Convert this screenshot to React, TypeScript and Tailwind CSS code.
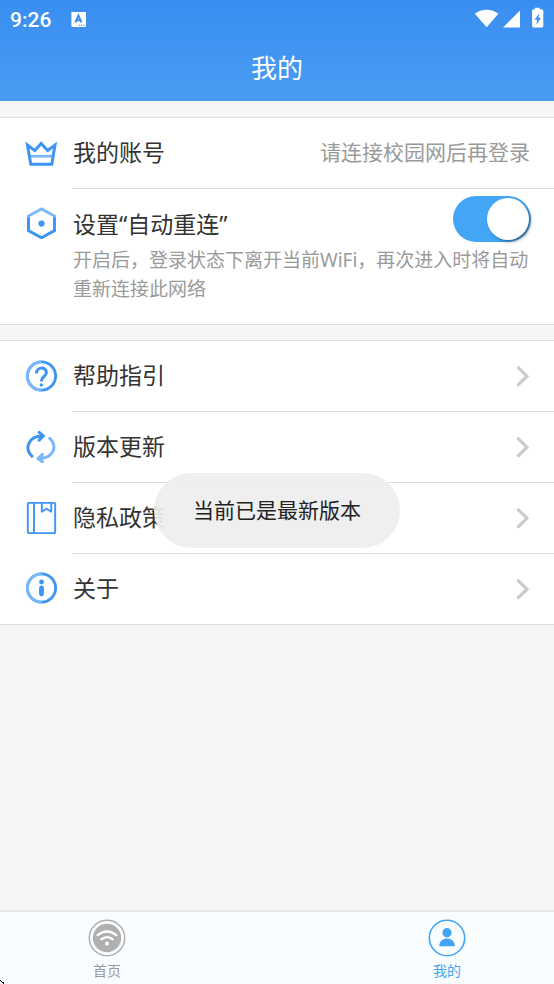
import { useState } from "react";
import type { ReactNode } from "react";

const BLUE = "#3d94f3";
const PALE = "#7ab8fa";

function CrownIcon() {
  return (
    <svg viewBox="0 0 32 32" className="size-8" fill="none" aria-hidden="true">
      <path d="M5.5 18.2H27.5" stroke={PALE} strokeWidth="2.8" />
      <path d="M2.4 7 5.8 26.2H26.8L30 7 22.6 12.4 16.2 5.4 9.8 12.4Z" stroke={BLUE} strokeWidth="3" />
    </svg>
  );
}

function HexIcon() {
  return (
    <svg viewBox="0 0 32 32" className="size-8" fill="none" strokeWidth="2.9" aria-hidden="true">
      <path d="M3.5 11V9L16.5 1.9 29.5 9V11" stroke={PALE} />
      <path d="M3.5 10.4V23.6L16.5 30.8 29.5 23.6V10.4" stroke={BLUE} />
      <circle cx="16.5" cy="16.6" r="3.1" fill={BLUE} />
    </svg>
  );
}

function Ring() {
  return (
    <>
      <circle cx="16.5" cy="16" r="14.1" stroke={BLUE} />
      <path d="M16.5 1.9A14.1 14.1 0 0 0 16.5 30.1" stroke={PALE} />
    </>
  );
}

function HelpIcon() {
  return (
    <svg viewBox="0 0 32 32" className="size-8" fill="none" strokeWidth="2.9" aria-hidden="true">
      <Ring />
      <path d="M11.4 13.4C11.4 6.4 21.4 6.6 21.4 12.6 21.4 16.4 16.3 16.6 16.3 21.4" stroke={BLUE} strokeWidth="3" />
      <circle cx="16.3" cy="25" r="1.7" fill={BLUE} />
    </svg>
  );
}

function UpdateIcon() {
  return (
    <svg viewBox="0 0 32 32" className="size-8" fill="none" strokeWidth="3" strokeLinecap="round" strokeLinejoin="round" aria-hidden="true">
      <path d="M7 25.2C-1 17.2 3.4 5 17.6 5M14.2 1.4 18.4 5 14.2 9.2" stroke={BLUE} />
      <path d="M24.8 7.4C32.8 15.4 28.8 27.4 13.6 27.6M17.4 23.4 13 27.6 17.4 30.8" stroke={PALE} />
    </svg>
  );
}

function BookIcon() {
  return (
    <svg viewBox="0 0 32 32" className="size-8" fill="none" stroke={BLUE} strokeWidth="1.9" strokeLinejoin="round" aria-hidden="true">
      <rect x="2.8" y="0.9" width="27.4" height="30.2" rx="1.2" />
      <path d="M9 1V31" />
      <path d="M16.8 1V9.8L21.6 6.8 26.2 9.8V1" />
    </svg>
  );
}

function InfoIcon() {
  return (
    <svg viewBox="0 0 32 32" className="size-8" fill="none" strokeWidth="2.9" aria-hidden="true">
      <Ring />
      <circle cx="16.5" cy="10" r="2.4" fill={BLUE} />
      <path d="M16.5 16V22" stroke={BLUE} strokeWidth="4.8" strokeLinecap="round" />
    </svg>
  );
}

function Chevron() {
  return (
    <svg viewBox="0 0 14 22" className="h-[22px] w-[14px]" fill="none" aria-hidden="true">
      <path d="M2.4 2.8 11 11.2 2.4 19.6" stroke="#cbcbcb" strokeWidth="3.2" strokeLinecap="round" />
    </svg>
  );
}

function StatusBar() {
  return (
    <div className="flex h-9 items-center px-[10px] pt-1">
      <span className="font-[Roboto] text-[21px] leading-6 font-medium">9:26</span>
      <svg viewBox="0 0 16 16" className="ml-5 size-4" aria-hidden="true">
        <rect x="0.4" y="-1" width="14.6" height="16" rx="1.2" fill="#fff" />
        <path d="M4.4 10.4 7.4 3.6 10.4 10.4M5.4 8.2H9.3" fill="none" stroke="#3d8ff0" strokeWidth="2" />
        <path d="M7.8 13.3H13.8" stroke="#3d8ff0" strokeWidth="1.1" strokeDasharray="1.2 1" />
      </svg>
      <svg viewBox="0 0 70 20" className="ml-auto h-5 w-[70px] overflow-visible" fill="#fff" aria-hidden="true">
        <path d="M0.8 3.8C7.4 -1.7 17.8 -1.7 24.4 3.8L12.6 17.2Z" />
        <path d="M46 0.4V17.4H29Z" />
        <path d="M60.9 -2.2H65.5V-0.8H67.5Q69.3 -0.8 69.3 0.8V16Q69.3 17.6 67.7 17.6H59.7Q58.1 17.6 58.1 16V0.8Q58.1 -0.8 59.7 -0.8H60.9Z" />
        <path d="M65.2 3.2 60.6 9.8H63.2L62.4 14.8 67 7.8H64.4Z" fill="#3d8ff0" />
      </svg>
    </div>
  );
}

function LinkRow({ icon, label, last }: { icon: ReactNode; label: string; last?: boolean }) {
  return (
    <button type="button" className="flex w-full items-stretch gap-[15px] pl-[25px] text-left">
      <span className="flex items-center pb-0.5">{icon}</span>
      <span
        className={
          last
            ? "flex h-[70px] flex-1 items-center justify-between pr-6 pl-px"
            : "flex h-[71px] flex-1 items-center justify-between border-b border-[#dcdcdc] pr-6 pl-px"
        }
      >
        <span className="pb-0.5 text-[23px]">{label}</span>
        <Chevron />
      </span>
    </button>
  );
}

export default function App() {
  const [auto, setAuto] = useState(true);
  return (
    <div className="relative flex min-h-screen flex-col bg-[#f6f6f6] font-['Noto_Sans','Noto_Sans_CJK_SC',sans-serif] text-[#333333]">
      <header className="bg-linear-to-b from-[#388ef0] to-[#4b9df3] text-white">
        <StatusBar />
        <h1 className="h-[65px] text-center text-[26px] leading-[64px]">我的</h1>
      </header>

      <main className="flex flex-1 flex-col gap-[15px] pt-4">
        <section className="border-y border-[#dcdcdc] bg-white">
          <div className="flex gap-[15px] pl-[25px]">
            <span className="flex items-center">
              <CrownIcon />
            </span>
            <div className="flex h-[71px] flex-1 items-center justify-between border-b border-[#dcdcdc] pr-6 pl-px">
              <span className="pb-0.5 text-[23px]">我的账号</span>
              <span className="text-[21px] text-[#9a9a9a]">请连接校园网后再登录</span>
            </div>
          </div>
          <div className="flex gap-[15px] pl-[25px]">
            <span className="pt-[18px]">
              <HexIcon />
            </span>
            <div className="flex-1 pr-[18px] pb-5 pl-px">
              <div className="flex h-[57px] items-start justify-between">
                <label htmlFor="auto" className="pt-[17px] text-[23px] leading-9">
                  设置“自动重连”
                </label>
                <input
                  id="auto"
                  type="checkbox"
                  role="switch"
                  checked={auto}
                  onChange={(e) => setAuto(e.target.checked)}
                  className="mt-[7px] mr-[5px] flex h-[46px] w-[78px] shrink-0 appearance-none justify-start rounded-full bg-[#cccccc] p-0.5 before:size-[42px] before:rounded-full before:bg-white before:shadow-[2px_2px_3px_rgba(0,0,0,0.35)] checked:justify-end checked:bg-[#42a5f5]"
                />
              </div>
              <p className="text-[19px] leading-[29px] text-[#9a9a9a]">
                开启后，登录状态下离开当前WiFi，再次进入时将自动重新连接此网络
              </p>
            </div>
          </div>
        </section>

        <section className="border-y border-[#dcdcdc] bg-white">
          <LinkRow icon={<HelpIcon />} label="帮助指引" />
          <LinkRow icon={<UpdateIcon />} label="版本更新" />
          <LinkRow icon={<BookIcon />} label="隐私政策" />
          <LinkRow icon={<InfoIcon />} label="关于" last />
        </section>
      </main>

      <nav className="flex h-[74px] justify-between border-t-2 border-[#e6e6e6] bg-[#fafdff] px-[70px] text-sm">
        <button type="button" className="flex w-[74px] flex-col items-center gap-1 pt-[7px] text-[#9a9a9a]">
          <svg viewBox="0 0 38 38" className="size-[38px]" fill="none" aria-hidden="true">
            <circle cx="19" cy="19" r="17.7" stroke="#b0b0b0" strokeWidth="1.5" />
            <circle cx="19" cy="19" r="14.2" fill="#b0b0b0" />
            <path d="M9.6 16.2Q19 8.8 28.4 16.2M13.2 20.4Q19 15.8 24.8 20.4" stroke="#fff" strokeWidth="2.2" strokeLinecap="round" />
            <circle cx="19" cy="24.6" r="2" fill="#fff" />
          </svg>
          <span>首页</span>
        </button>
        <button type="button" aria-current="page" className="flex w-[74px] flex-col items-center gap-1 pt-[7px] text-[#42a5f5]">
          <svg viewBox="0 0 38 38" className="size-[38px]" fill="none" aria-hidden="true">
            <circle cx="19" cy="19" r="17.7" stroke="#42a5f5" strokeWidth="1.6" />
            <circle cx="19" cy="13.7" r="4.6" fill="#42a5f5" />
            <path d="M11.2 27.2C11.2 16.8 26.8 16.8 26.8 27.2Z" fill="#42a5f5" />
          </svg>
          <span>我的</span>
        </button>
      </nav>

      <div
        role="status"
        className="absolute bottom-[436px] left-1/2 -translate-x-1/2 rounded-full bg-[#eeeeee]/93 px-[39px] py-[22px] text-[21px] leading-[31px] whitespace-nowrap text-[#222222]"
      >
        当前已是最新版本
      </div>

      <svg viewBox="0 0 4 4" className="absolute bottom-0 left-0 size-1" aria-hidden="true">
        <path d="M0 0H1V1H2V2H4V4H3V3H2V2H1V1H0Z" fill="#000" />
      </svg>
    </div>
  );
}
